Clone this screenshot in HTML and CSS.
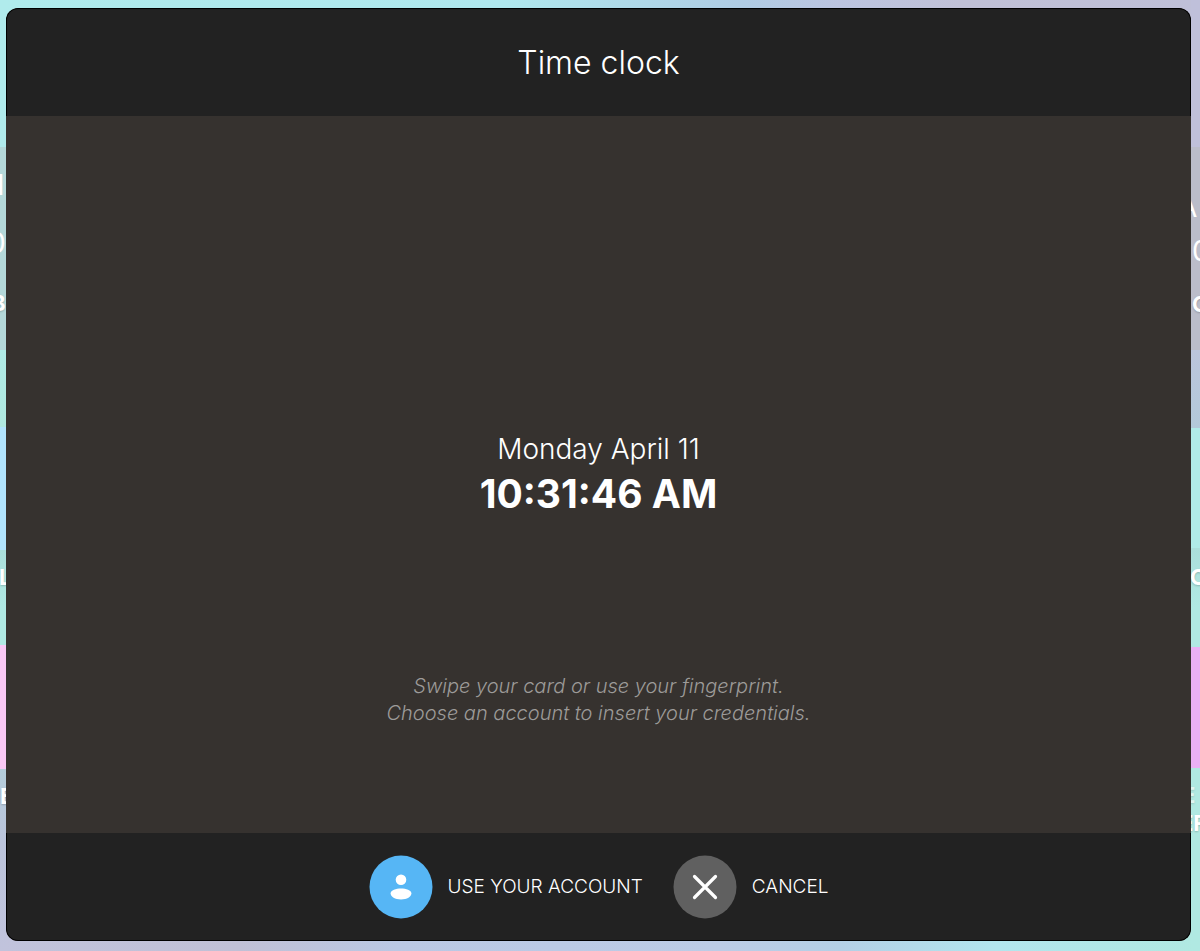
FILE: index.html
```html
<!DOCTYPE html>
<html lang="en">
<head>
<meta charset="utf-8">
<title>Time clock</title>
<link rel="stylesheet" href="styles.css">
</head>
<body>
<div class="page">
  <div class="backdrop" aria-hidden="true">
    <div class="edge edge-left">
      <div class="band sky"></div>
      <div class="band card">
        <span class="thin initial">I</span>
        <span class="thin figure">0</span>
        <span class="bold tag">B</span>
      </div>
      <div class="band mint"></div>
      <div class="band blue"></div>
      <div class="band mint-label"><span class="bold">L</span></div>
      <div class="band pink"></div>
      <div class="band dusk"><span class="bold">E</span></div>
    </div>
    <div class="edge edge-right">
      <div class="band lilac"></div>
      <div class="band card">
        <span class="thin initial">A</span>
        <span class="thin figure">0</span>
        <span class="bold tag">C</span>
      </div>
      <div class="band haze"></div>
      <div class="band aqua"></div>
      <div class="band mint-label"><span class="bold">C</span></div>
      <div class="band violet"></div>
      <div class="band mint-end"><span class="bold faint">E</span><span class="bold">ER</span></div>
    </div>
  </div>
  <main class="dialog" role="dialog" aria-labelledby="dialog-title">
    <header class="dialog-header"><h1 id="dialog-title">Time clock</h1></header>
    <section class="dialog-body">
      <div class="clock">
        <p class="date">Monday April 11</p>
        <p class="time">10:31:46 AM</p>
      </div>
      <p class="hint">Swipe your card or use your fingerprint.<br>Choose an account to insert your credentials.</p>
    </section>
    <footer class="dialog-footer">
      <button class="action" type="button">
        <svg class="action-icon" viewBox="0 0 64 64" aria-hidden="true">
          <circle cx="32" cy="32" r="31.5" fill="#56b6f5"/>
          <circle cx="32" cy="24.8" r="5.3" fill="#fff"/>
          <path d="M21.6 38.4C21.6 35 27 33.4 32 33.4S42.4 35 42.4 38.4C42.4 41.4 38 44.4 32 44.4S21.6 41.4 21.6 38.4Z" fill="#fff"/>
        </svg>
        <span>USE YOUR ACCOUNT</span>
      </button>
      <button class="action" type="button">
        <svg class="action-icon" viewBox="0 0 64 64" aria-hidden="true">
          <circle cx="32" cy="32" r="31.5" fill="#606060"/>
          <path d="M21.5 21.5 42.5 42.5M42.5 21.5 21.5 42.5" stroke="#fff" stroke-width="3.2" stroke-linecap="round"/>
        </svg>
        <span>CANCEL</span>
      </button>
    </footer>
  </main>
</div>
</body>
</html>
```
FILE: styles.css
```css
* { box-sizing: border-box; }
body, h1, p { margin: 0; }
body { font-family: Inter, "Liberation Sans", sans-serif; font-weight: 300; color: #fff; }

.page {
  display: grid;
  min-height: 100vh;
  background:
    linear-gradient(90deg, #b0ebec 0%, #b0e8ee 42%, #b0cce4 62%, #bcc4e0 70%, #c0c0d6 80%, #bfc0d8 100%) top / 100% 50% no-repeat,
    linear-gradient(90deg, #c1c3dc 0%, #c0c0d6 20%, #bac8e4 33%, #bccce6 60%, #b4d0e6 70%, #b2e6ee 83%, #b0e9e1 100%) bottom / 100% 50% no-repeat;
}
.backdrop, .dialog { grid-area: 1 / 1; }
.backdrop { display: flex; justify-content: space-between; }

/* Slices of the home screen that stay visible beside the dialog */
.edge { display: flex; flex-direction: column; line-height: 24px; overflow: hidden; }
.edge-left { width: 8px; }
.edge-right { width: 9px; }
.band { display: flex; flex-direction: column; overflow: hidden; }
.thin { font-weight: 400; }
.bold { font-size: 22px; font-weight: 700; text-shadow: 0 1px 2px rgb(0 0 0 / 20%); }
.faint { opacity: 0.6; }
.sky { width: 6px; height: 147px; background: #b0ebec; }
.lilac { height: 147px; background: #bfc0da; }
.card { height: 203px; padding-top: 26px; }
.edge-left .card { background: #b4d8d9; }
.edge-right .card { background: #bbbdca; }
.initial, .figure { font-size: 28px; }
.figure { margin-top: 34px; }
.tag { margin-top: 36px; }
.edge-left .initial { margin-left: -3px; }
.edge-left .figure { margin-left: -12px; }
.edge-left .tag { margin-left: -9px; }
.edge-right .initial { margin: 22px 0 0 -13px; }
.edge-right .figure { margin: 20px 0 0 1px; }
.edge-right .tag { margin: 29px 0 0 1px; }
.mint { height: 77px; background: linear-gradient(#b0ebe6, #b0e9df); }
.blue { height: 123px; background: #b1e4fd; }
.mint-label { height: 95px; padding-top: 15px; background: linear-gradient(#abdfdb, #b0e9e3 60%); }
.edge-right .mint-label { height: 99px; padding-top: 17px; }
.mint-label .bold { margin-left: -1px; }
.pink { height: 124px; background: #f9c8f5; }
.dusk { flex: 1; width: 6px; padding-top: 15px; background: linear-gradient(#b4cddb, #bbc4db 40%, #c1c3dc); }
.haze { height: 78px; background: linear-gradient(#bbc5dc, #b3c9d9); }
.aqua { height: 120px; background: #b0ebe8; }
.violet { height: 121px; background: #eab0f5; }
.mint-end { flex: 1; padding-top: 15px; background: #b0e9e2; }
.mint-end .bold { margin: 0 0 4px -11px; }
.mint-end .faint { margin-left: -9px; }

.dialog {
  display: flex;
  flex-direction: column;
  margin: 8px 9px 10px 6px;
  border-radius: 12px;
  overflow: hidden;
  background: #36322f;
  z-index: 1;
}
.dialog-header, .dialog-footer {
  display: flex;
  align-items: center;
  justify-content: center;
  height: 108px;
  border: 1px solid #000;
  background: #222;
}
.dialog-header { border-bottom: 0; border-radius: 12px 12px 0 0; }
.dialog-footer { border-top: 0; border-radius: 0 0 12px 12px; gap: 30px; }
h1 { font-size: 32px; line-height: 40px; font-weight: 300; }

.dialog-body {
  flex: 1;
  display: flex;
  flex-direction: column;
  align-items: center;
  justify-content: flex-end;
  gap: 154px;
  padding-bottom: 106px;
  text-align: center;
}
.date { font-size: 28px; line-height: 40px; }
.time { font-size: 39px; line-height: 50px; font-weight: 700; }
.hint { font-size: 20px; line-height: 27px; font-style: italic; color: #9d9b99; }

.action {
  display: flex;
  align-items: center;
  gap: 15px;
  padding: 0;
  border: 0;
  background: none;
  color: #fff;
  font: inherit;
  font-size: 19px;
  cursor: pointer;
}
.action-icon { width: 64px; height: 64px; }
```
